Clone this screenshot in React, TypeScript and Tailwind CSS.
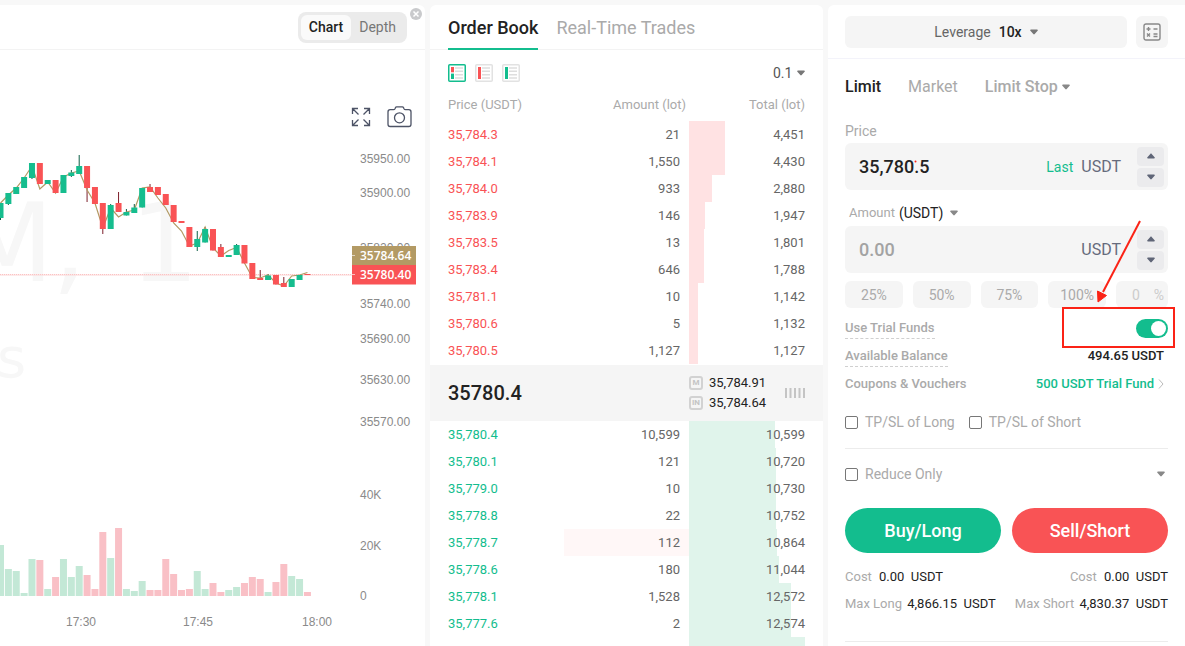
import { useState } from "react";

type Candle = {
  open: number;
  close: number;
  high?: number;
  low?: number;
  up: boolean;
  avg: number;
  vol: number;
};

// body top/bottom, wick, moving average and volume height, all in chart units
const candles: Candle[] = [
  { open: 203, close: 218, low: 220, up: true, avg: 203, vol: 51 },
  { open: 193, close: 204, low: 205, up: true, avg: 195, vol: 27 },
  { open: 187, close: 194, up: true, avg: 188, vol: 25 },
  { open: 177, close: 188, up: true, avg: 178, vol: 3 },
  { open: 163, close: 178, low: 179, up: true, avg: 166, vol: 37 },
  { open: 163, close: 184, up: false, avg: 189, vol: 36 },
  { open: 180, close: 184, up: true, avg: 182, vol: 7 },
  { open: 180, close: 193, up: false, avg: 193, vol: 19 },
  { open: 175, close: 193, up: true, avg: 177, vol: 37 },
  { open: 172.5, close: 176, high: 170, low: 177, up: true, avg: 173, vol: 19 },
  { open: 166, close: 174, high: 155, up: true, avg: 171, vol: 30 },
  { open: 166, close: 188, low: 202, up: false, avg: 190, vol: 21 },
  { open: 187, close: 204, up: false, avg: 203, vol: 7 },
  { open: 203, close: 229, low: 234, up: false, avg: 228, vol: 64 },
  { open: 205, close: 229, high: 204, up: true, avg: 208, vol: 38 },
  { open: 203, close: 212, high: 192, up: false, avg: 217, vol: 68 },
  { open: 212, close: 215.5, high: 209, up: true, avg: 212, vol: 7 },
  { open: 207.5, close: 213, high: 204, up: true, avg: 210, vol: 5 },
  { open: 188, close: 207.5, up: true, avg: 188, vol: 15 },
  { open: 187, close: 192, high: 184, up: false, avg: 187, vol: 6 },
  { open: 187, close: 195, up: false, avg: 198, vol: 6 },
  { open: 194, close: 205, up: false, avg: 208, vol: 37 },
  { open: 205, close: 222, up: false, avg: 223, vol: 22 },
  { open: 221, close: 223, up: false, avg: 231, vol: 6 },
  { open: 227, close: 247, up: false, avg: 246, vol: 7 },
  { open: 239, close: 247, high: 231, low: 251, up: true, avg: 243, vol: 25 },
  { open: 229, close: 242.5, high: 227, up: true, avg: 227, vol: 7 },
  { open: 229, close: 250.5, up: false, avg: 248, vol: 13 },
  { open: 247, close: 257, high: 244, up: false, avg: 256, vol: 4 },
  { open: 255, close: 257, up: true, avg: 250.5, vol: 6 },
  { open: 245, close: 255, high: 244, up: true, avg: 247.5, vol: 9 },
  { open: 245, close: 263.5, up: false, avg: 263, vol: 13 },
  { open: 263, close: 279, up: false, avg: 277.5, vol: 19 },
  { open: 278, close: 280, high: 270, up: false, avg: 278, vol: 17 },
  { open: 275.5, close: 280, high: 274, up: true, avg: 275, vol: 4 },
  { open: 275, close: 284.5, up: false, avg: 283, vol: 14 },
  { open: 283, close: 287, high: 277, up: false, avg: 286, vol: 32 },
  { open: 279, close: 287, up: true, avg: 276, vol: 20 },
  { open: 275, close: 280, up: true, avg: 275, vol: 17 },
  { open: 274, close: 275, up: false, avg: 272.5, vol: 4 },
];

const xOf = (i: number) => 0.5 + i * 7.87;

const priceTicks: [string, number][] = [
  ["35950.00", 159],
  ["35900.00", 193],
  ["35820.00", 248],
  ["35740.00", 304],
  ["35690.00", 339],
  ["35630.00", 380],
  ["35570.00", 422],
  ["40K", 495],
  ["20K", 546],
  ["0", 596],
];

const timeTicks: [string, number][] = [
  ["17:30", 81],
  ["17:45", 198],
  ["18:00", 317],
];

const asks = [
  ["35,784.3", "21", "4,451"],
  ["35,784.1", "1,550", "4,430"],
  ["35,784.0", "933", "2,880"],
  ["35,783.9", "146", "1,947"],
  ["35,783.5", "13", "1,801"],
  ["35,783.4", "646", "1,788"],
  ["35,781.1", "10", "1,142"],
  ["35,780.6", "5", "1,132"],
  ["35,780.5", "1,127", "1,127"],
];

const bids = [
  ["35,780.4", "10,599", "10,599"],
  ["35,780.1", "121", "10,720"],
  ["35,779.0", "10", "10,730"],
  ["35,778.8", "22", "10,752"],
  ["35,778.7", "112", "10,864"],
  ["35,778.6", "180", "11,044"],
  ["35,778.1", "1,528", "12,572"],
  ["35,777.6", "2", "12,574"],
];

const DEPTH_MAX = 14300;

function depthWidth(total: string) {
  const n = Number(total.replace(",", ""));
  return `${Math.min(100, (n / DEPTH_MAX) * 100)}%`;
}

function Caret({ up = false, className = "" }: { up?: boolean; className?: string }) {
  return (
    <svg
      width="8"
      height="6"
      viewBox="0 0 8 6"
      className={`shrink-0 fill-current ${up ? "rotate-180" : ""} ${className}`}
      aria-hidden="true"
    >
      <path d="M1 .5h6c.8 0 1.1.8.6 1.3L4.7 5.1c-.4.4-1 .4-1.4 0L.4 1.8C-.1 1.3.2.5 1 .5z" />
    </svg>
  );
}

function PriceChart() {
  return (
    <svg viewBox="0 50 425 596" className="block w-full" role="img" aria-label="Price chart">
      <g fill="#f7f7f7" className="font-['DejaVu_Sans',sans-serif]">
        <text x="43" y="281" fontSize="108" textAnchor="middle" dx="-36">
          M
        </text>
        <text x="52" y="281" fontSize="108">
          ,
        </text>
        <text x="130" y="281" fontSize="108">
          1
        </text>
        <text x="-3" y="377" fontSize="56">
          s
        </text>
      </g>

      {candles.map((c, i) => (
        <rect
          key={i}
          x={xOf(i) - 3.5}
          y={596 - c.vol}
          width="7"
          height={c.vol}
          fill={c.up ? "#c3e8d6" : "#f9c0c6"}
        />
      ))}

      <line x1="0" x2="352" y1="274.5" y2="274.5" stroke="#fbb0b0" strokeDasharray="1 1" />
      <line x1="0" x2="352" y1="275" y2="275" stroke="#fcd6d6" />

      {candles.map((c, i) => (
        <g key={i}>
          <line
            x1={xOf(i)}
            x2={xOf(i)}
            y1={c.high ?? c.open}
            y2={c.low ?? c.close}
            stroke={c.up ? "#0d5f46" : "#7d1f2b"}
          />
        </g>
      ))}
      <polyline
        points={candles.map((c, i) => `${xOf(i)},${c.avg}`).join(" ")}
        fill="none"
        stroke="#b39a64"
        strokeWidth="1.2"
      />
      {candles.map((c, i) => (
        <rect
          key={i}
          x={xOf(i) - 3}
          y={c.open}
          width="6"
          height={c.close - c.open}
          fill={c.up ? "#16bd8e" : "#f95355"}
        />
      ))}

      <g fill="#8a8a8a" fontSize="12" className="font-['Liberation_Sans',Arial,sans-serif]">
        {priceTicks.map(([label, y]) => (
          <text key={label} x="360" y={y + 4}>
            {label}
          </text>
        ))}
        {timeTicks.map(([label, x]) => (
          <text key={label} x={x} y="626" textAnchor="middle">
            {label}
          </text>
        ))}
      </g>

      <g fontSize="12" fontWeight="600" className="font-['Open_Sans',sans-serif]">
        <rect x="352" y="246" width="64" height="19" fill="#b39a64" />
        <rect x="352" y="265" width="64" height="19.5" fill="#f95355" />
        <path d="M352 255.5h3M352 274.5h3" stroke="#fff" strokeOpacity=".6" />
        <text x="360" y="260" fill="#fff">
          35784.64
        </text>
        <text x="360" y="279" fill="#fff">
          35780.40
        </text>
      </g>
    </svg>
  );
}

function ChartPanel() {
  return (
    <section className="relative min-w-0 flex-1 rounded-tr-md bg-white">
      <header className="flex h-[45px] items-center justify-end border-b border-[#f3f3f3] pr-[18px]">
        <div className="flex h-[31px] rounded-lg bg-[#ebebeb] p-[3px] text-sm">
          <button className="rounded-md bg-[#fafafa] px-2 font-medium text-[#222]">Chart</button>
          <button className="px-2 text-[#777]">Depth</button>
        </div>
      </header>
      <button aria-label="Close" className="absolute top-[3px] right-[3px]">
        <svg width="12" height="12" viewBox="0 0 12 12">
          <circle cx="6" cy="6" r="6" fill="#c9cacc" />
          <path d="M3.5 3.5l5 5M8.5 3.5l-5 5" stroke="#fff" strokeWidth="1.5" />
        </svg>
      </button>
      <div className="absolute top-[101px] right-[13px] flex items-center gap-4 text-[#4d5366]">
        <button aria-label="Full screen">
          <svg width="20" height="20" viewBox="0 0 20 20" fill="none" stroke="currentColor" strokeWidth="1.3">
            <path d="M1.5 7V1.5H7M1.5 1.5l6 6M13 1.5h5.500V7M18.5 1.500l-6 6M1.500 13v5.500H7M1.500 18.500l6-6M13 18.500h5.500V13M18.500 18.500l-6-6" />
          </svg>
        </button>
        <button aria-label="Take a snapshot">
          <svg width="25" height="22" viewBox="0 0 25 22" fill="none" stroke="currentColor" strokeWidth="1.3">
            <path d="M3.2 3.700h3.300c.8 0 1.200-.3 1.500-1l.3-.8c.3-.7.7-1 1.400-1h5.600c.7 0 1.100.3 1.400 1l.3.8c.3.7.7 1 1.500 1h3.300c1.300 0 2.200.9 2.200 2.200v12.400c0 1.300-.9 2.200-2.200 2.200H3.200C1.900 20.500 1 19.600 1 18.300V5.900c0-1.300.9-2.200 2.200-2.200z" />
            <circle cx="12.5" cy="11.8" r="5" />
          </svg>
        </button>
      </div>
      <PriceChart />
    </section>
  );
}

function BookIcon({ top, bottom, active = false }: { top: string; bottom: string; active?: boolean }) {
  return (
    <svg width="18" height="18" viewBox="0 0 18 18">
      <rect
        x=".75"
        y=".75"
        width="16.5"
        height="16.5"
        rx="1"
        fill="#fff"
        stroke={active ? "#13bd8e" : "#e2e2e2"}
        strokeWidth="1.5"
      />
      <rect x="3" y="3" width="3" height="6" fill={top} />
      <rect x="3" y="9" width="3" height="6" fill={bottom} />
      {active && <rect x="3" y="8.3" width="3" height="1.3" fill="#fff" />}
      <path d="M7 4h8M7 7.300h8M7 10.700h8M7 14h8" stroke="#dedede" strokeWidth="1.6" />
    </svg>
  );
}

function BookRows({ rows, side }: { rows: string[][]; side: "ask" | "bid" }) {
  return (
    <tbody>
      {rows.map(([price, amount, total]) => (
        <tr key={price} className="h-[27px] text-[#666]">
          <td className={side === "ask" ? "text-[#f95355]" : "text-[#13bd8e]"}>{price}</td>
          <td className={`pr-[9px] text-right ${price === "35,778.7" ? "bg-[#fff7f7]" : ""}`}>{amount}</td>
          <td className="relative text-right">
            <span
              className={`absolute inset-y-0 left-0 ${side === "ask" ? "bg-[#ffe2e3]" : "bg-[#e0f4eb]"}`}
              style={{ width: depthWidth(total) }}
            />
            <span className="relative">{total}</span>
          </td>
        </tr>
      ))}
    </tbody>
  );
}

function Columns() {
  return (
    <colgroup>
      <col />
      <col className="w-[125px]" />
      <col className="w-[116px]" />
    </colgroup>
  );
}

function OrderBook() {
  return (
    <section className="w-[393px] shrink-0 rounded-t-md bg-white">
      <header className="flex h-[45px] gap-[18px] border-b border-[#f3f3f3] px-[18px] text-lg">
        <button className="h-[45px] border-b-2 border-[#13bd8e] pt-0.5 font-medium text-[#222]">Order Book</button>
        <button className="h-[45px] border-b-2 border-transparent pt-0.5 text-[#aaa]">Real-Time Trades</button>
      </header>

      <div className="flex items-center justify-between px-[18px] pt-[13px]">
        <div className="flex gap-[9px]">
          <button aria-label="Asks and bids">
            <BookIcon top="#f95355" bottom="#13bd8e" active />
          </button>
          <button aria-label="Asks only">
            <BookIcon top="#f95355" bottom="#f95355" />
          </button>
          <button aria-label="Bids only">
            <BookIcon top="#13bd8e" bottom="#13bd8e" />
          </button>
        </div>
        <label className="flex items-center gap-1 text-[#777]">
          <select aria-label="Price step" className="appearance-none text-sm text-[#555]">
            <option>0.1</option>
          </select>
          <Caret />
        </label>
      </div>

      <div className="px-[18px] pt-1.5 pb-px">
        <table className="w-full table-fixed text-[13px]">
          <Columns />
          <thead>
            <tr className="h-8 text-[#aaa]">
              <th className="text-left font-normal">Price (USDT)</th>
              <th className="pr-[3px] text-right font-normal">Amount (lot)</th>
              <th className="text-right font-normal">Total (lot)</th>
            </tr>
          </thead>
          <BookRows rows={asks} side="ask" />
        </table>
      </div>

      <div className="flex h-14 items-center bg-[#f5f5f5] px-[18px]">
        <strong className="flex-1 text-xl font-medium text-[#222]">35780.4</strong>
        <dl className="grid w-[96px] grid-cols-[14px_1fr] items-center gap-x-1.5 text-[13px] leading-5 text-[#222]">
          <dt className="flex h-3.5 items-center justify-center rounded-[3px] border-2 border-[#d2d2d2] text-[8px] font-bold text-[#c4c4c4]">
            M
          </dt>
          <dd>35,784.91</dd>
          <dt className="flex h-3.5 items-center justify-center rounded-[3px] border-2 border-[#d2d2d2] text-[8px] font-bold text-[#c4c4c4]">
            IN
          </dt>
          <dd>35,784.64</dd>
        </dl>
        <svg width="20" height="10" viewBox="0 0 20 10">
          <path d="M1 0v10M5.500 0v10M10 0v10M14.500 0v10M19 0v10" stroke="#c4c4c4" strokeWidth="2" />
        </svg>
      </div>

      <div className="px-[18px]">
        <table className="w-full table-fixed text-[13px]">
          <Columns />
          <BookRows rows={bids} side="bid" />
        </table>
        <div className="ml-auto h-[27px] w-[116px] bg-[#e0f4eb]" />
      </div>
    </section>
  );
}

function Stepper() {
  return (
    <span className="flex flex-col gap-[2px] text-[#5f6577]">
      <button
        aria-label="Increase"
        className="flex h-[19px] w-[27px] items-center justify-center rounded-sm bg-[#ebebed]"
      >
        <Caret up />
      </button>
      <button
        aria-label="Decrease"
        className="flex h-[19px] w-[27px] items-center justify-center rounded-sm bg-[#ebebed]"
      >
        <Caret />
      </button>
    </span>
  );
}

function Check({ label }: { label: string }) {
  return (
    <label className="flex items-center gap-[7px]">
      <input
        type="checkbox"
        className="size-[13px] appearance-none rounded-xs border border-[#777] bg-white checked:bg-[#13bd8e]"
      />
      {label}
    </label>
  );
}

function OrderForm() {
  const [price, setPrice] = useState("35,780.5");
  const [amount, setAmount] = useState("");
  const [trial, setTrial] = useState(true);

  return (
    <section className="relative w-[357px] shrink-0 rounded-tl-md bg-white text-[13px] leading-5 text-[#aaa]">
      <header className="flex gap-[9px] border-b border-[#f3f3fa] px-[17px] pt-[11px] pb-2.5">
        <button className="flex h-8 flex-1 items-center justify-center gap-2 rounded-md bg-[#f5f5f5] text-sm text-[#666]">
          Leverage
          <span className="font-medium text-[#222]">10x</span>
          <Caret className="text-[#777]" />
        </button>
        <button aria-label="Calculator" className="flex size-8 items-center justify-center rounded-md bg-[#f5f5f5]">
          <svg width="18" height="18" viewBox="0 0 18 18" fill="none" stroke="#888" strokeWidth="1.4">
            <rect x="1" y="1" width="16" height="16" rx="2" />
            <path d="M3.500 6h4M5.500 4v4M10.500 6h4M4 10.500l3 3M7 10.500l-3 3M10.500 11h4M10.500 13.500h4" />
          </svg>
        </button>
      </header>

      <div className="px-[17px]">
        <nav className="mt-[18px] flex h-5 gap-[27px] text-base leading-5">
          <button className="font-medium text-[#222]">Limit</button>
          <button>Market</button>
          <button className="flex items-center gap-1 font-medium" aria-haspopup="menu">
            Limit Stop
            <Caret className="text-[#888]" />
          </button>
        </nav>

        <label htmlFor="price" className="mt-6 block text-sm leading-5">
          Price
        </label>
        <div className="mt-0.5 flex h-[47px] items-center rounded-md bg-[#f5f5f5] pr-1 pl-3.5">
          <input
            id="price"
            value={price}
            onChange={(e) => setPrice(e.target.value)}
            className="min-w-0 flex-1 text-lg font-medium text-[#222] outline-none"
          />
          <button className="mr-2 text-sm text-[#13bd8e]">Last</button>
          <span className="mr-4 text-base text-[#666b7c]">USDT</span>
          <Stepper />
        </div>

        <div className="mt-[13px] flex items-center pl-1">
          <label htmlFor="amount">Amount</label>
          <label className="ml-1 flex items-center gap-1.5 text-[#888]">
            <select aria-label="Amount unit" className="appearance-none text-sm leading-5 text-[#222]">
              <option>(USDT)</option>
            </select>
            <Caret />
          </label>
        </div>
        <div className="mt-[3px] flex h-[47px] items-center rounded-md bg-[#f5f5f5] pr-1 pl-3.5">
          <input
            id="amount"
            value={amount}
            placeholder="0.00"
            onChange={(e) => setAmount(e.target.value)}
            className="min-w-0 flex-1 text-lg font-medium text-[#222] outline-none placeholder:text-[#a3a3a3]"
          />
          <span className="mr-4 text-base text-[#666b7c]">USDT</span>
          <Stepper />
        </div>

        <div className="mt-2 flex h-[27px] gap-2.5 text-sm">
          {["25%", "50%", "75%", "100%"].map((p) => (
            <button key={p} className="flex-1 rounded-md bg-[#f5f5f5]">
              {p}
            </button>
          ))}
          <label className="flex w-[52px] items-center rounded-md bg-[#f5f5f5] pr-1 pl-4 text-[#ccc]">
            <input
              aria-label="Custom percent"
              placeholder="0"
              className="min-w-0 flex-1 outline-none placeholder:text-[#ccc]"
            />
            %
          </label>
        </div>

        <div className="mt-1.5 font-medium">
          <div className="flex h-7 items-center justify-between">
            <label htmlFor="trial" className="border-b border-dashed border-[#d0d0d0]">
              Use Trial Funds
            </label>
            <input
              id="trial"
              type="checkbox"
              role="switch"
              checked={trial}
              onChange={(e) => setTrial(e.target.checked)}
              className="flex h-[19px] w-8 appearance-none items-center rounded-full bg-[#ccc] px-0.5 before:size-[15px] before:rounded-full before:bg-white checked:justify-end checked:bg-[#13bd8e]"
            />
          </div>
          <div className="flex h-7 items-center justify-between">
            <span className="border-b border-dashed border-[#d0d0d0]">Available Balance</span>
            <span className="mr-1 text-[#222]">494.65 USDT</span>
          </div>
          <div className="flex h-7 items-center justify-between">
            <span>Coupons &amp; Vouchers</span>
            <a href="#vouchers" className="flex items-center gap-1 pr-1 text-[#13bd8e]">
              500 USDT Trial Fund
              <svg width="6" height="10" viewBox="0 0 6 10" fill="none" stroke="#bbb">
                <path d="M1 .5L5 5 1 9.500" />
              </svg>
            </a>
          </div>
        </div>

        <div className="mt-3.5 flex gap-3.5 text-sm leading-5">
          <Check label="TP/SL of Long" />
          <Check label="TP/SL of Short" />
        </div>
        <hr className="mt-4 border-[#ececec]" />
        <div className="mt-[15px] flex items-center justify-between pr-[3px] text-sm leading-5">
          <Check label="Reduce Only" />
          <button aria-label="More options" className="text-[#888]">
            <Caret />
          </button>
        </div>

        <div className="mt-6 flex gap-[11px] text-lg font-medium text-white">
          <button className="h-[45px] flex-1 rounded-full bg-[#13bd8e]">Buy/Long</button>
          <button className="h-[45px] flex-1 rounded-full bg-[#f95355]">Sell/Short</button>
        </div>

        <div className="mt-3.5 flex justify-between">
          <p>
            Cost <span className="ml-1 text-[#222]">0.00&nbsp; USDT</span>
          </p>
          <p>
            Cost <span className="ml-1 text-[#222]">0.00&nbsp; USDT</span>
          </p>
        </div>
        <div className="mt-[7px] flex justify-between">
          <p>
            Max Long <span className="ml-0.5 text-[#222]">4,866.15&nbsp; USDT</span>
          </p>
          <p>
            Max Short <span className="ml-0.5 text-[#222]">4,830.37&nbsp; USDT</span>
          </p>
        </div>
        <hr className="mt-[27px] border-[#ececec]" />
      </div>

      {/* callout that points at the trial funds switch */}
      <svg
        className="pointer-events-none absolute top-[155px] right-[9px] overflow-visible"
        width="114"
        height="190"
        viewBox="1062 160 114 190"
        aria-hidden="true"
      >
        <circle cx="915.5" cy="161.5" r="1" fill="#fb2316" />
        <rect x="1063" y="308" width="111" height="39" fill="none" stroke="#fb2316" strokeWidth="2" />
        <path d="M1140 221l-37 71" stroke="#fb2316" strokeWidth="2" />
        <path d="M1098 302l-.5-11 9 4.500z" fill="#fb2316" stroke="#fb2316" />
      </svg>
    </section>
  );
}

export default function App() {
  return (
    <main className="flex h-screen gap-[5px] overflow-hidden bg-[#f8f8f8] pt-[5px] font-[Roboto,'Liberation_Sans',sans-serif]">
      <ChartPanel />
      <OrderBook />
      <OrderForm />
    </main>
  );
}
